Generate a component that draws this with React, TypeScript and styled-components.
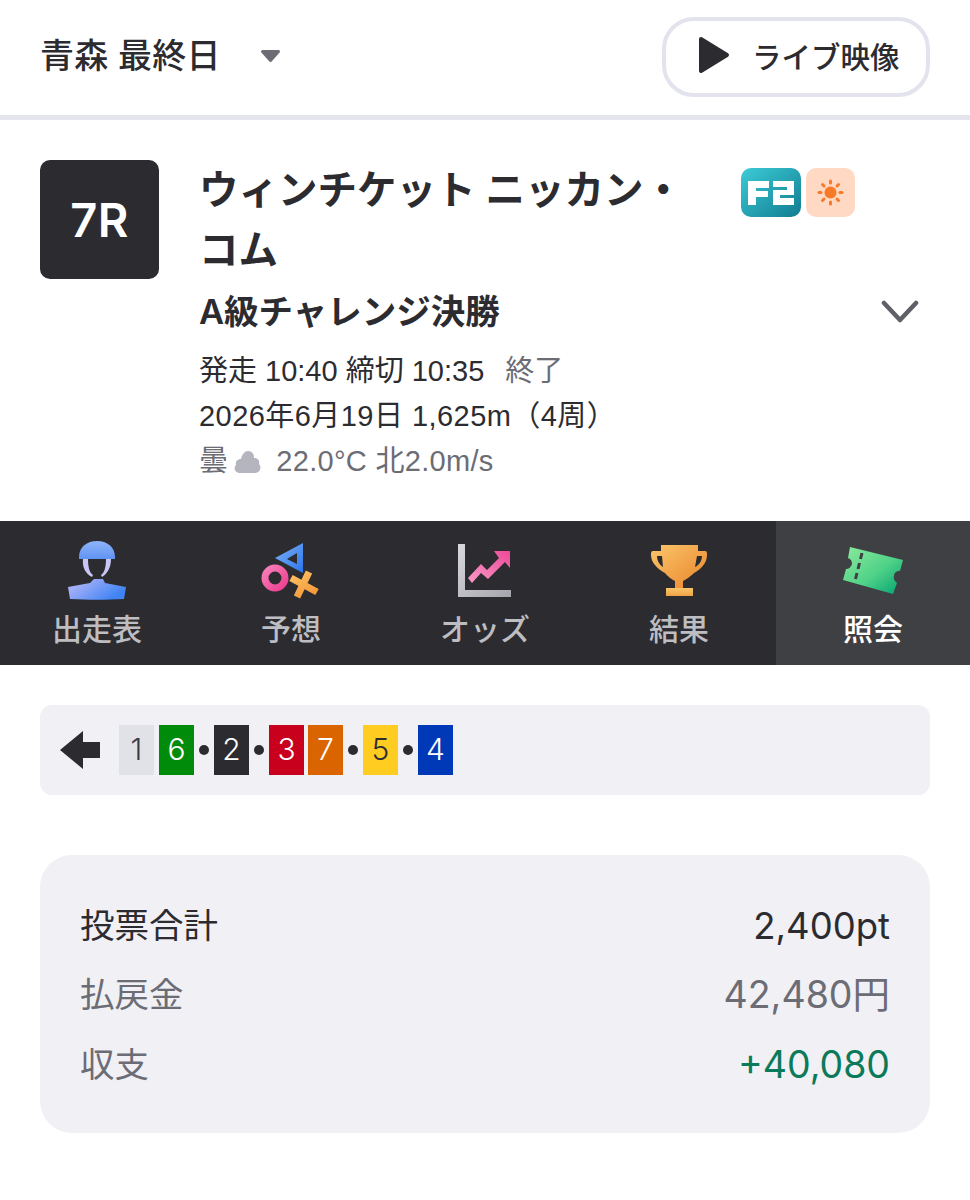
import React from "react";
import styled, { createGlobalStyle } from "styled-components";

const Global = createGlobalStyle`
  html, body { margin: 0; padding: 0; background: #fff; }
  body { font-family: "Inter", "Noto Sans CJK JP", sans-serif; color: #2c2c30; }
`;

const Page = styled.div`
  width: 970px;
  min-height: 1200px;
  background: #fff;
`;

const Header = styled.header`
  height: 115px;
  box-sizing: border-box;
  display: flex;
  align-items: center;
  justify-content: space-between;
  padding: 0 40px 0 40px;
`;

const Divider = styled.div`
  height: 5px;
  background: #e4e4ec;
`;

const VenueSelect = styled.div`
  display: flex;
  align-items: center;
  gap: 39px;
  margin-top: -4px;
`;

const VenueName = styled.span`
  font-size: 34px;
  line-height: 44px;
  font-weight: 500;
  letter-spacing: 0.3px;
  white-space: pre;
`;

const LiveButton = styled.button`
  width: 268px;
  height: 80px;
  box-sizing: border-box;
  border: 4px solid #e2e3ec;
  border-radius: 32px;
  background: #fff;
  display: flex;
  align-items: center;
  padding: 0 0 3px 32px;
  gap: 22px;
  font: 500 29.5px "Inter", "Noto Sans CJK JP", sans-serif;
  color: #2c2c30;
  margin-top: -2px;
  white-space: nowrap;
`;

const Race = styled.section`
  display: flex;
  padding: 40px 40px 0;
  height: 401px;
  box-sizing: border-box;
`;

const RaceBadge = styled.div`
  width: 119px;
  height: 119px;
  border-radius: 10px;
  background: #2c2c30;
  color: #fff;
  font-size: 47px;
  font-weight: 600;
  letter-spacing: 0.5px;
  display: flex;
  align-items: center;
  justify-content: center;
  flex: none;
`;

const RaceBody = styled.div`
  margin-left: 40px;
  flex: 1;
  min-width: 0;
`;

const TitleRow = styled.div`
  display: flex;
  justify-content: space-between;
`;

const RaceTitle = styled.h1`
  margin: 0;
  width: 500px;
  font-size: 39.5px;
  line-height: 60px;
  font-weight: 600;
`;

const Badges = styled.div`
  display: flex;
  gap: 5px;
  margin: 8px 75px 0 0;
`;

const SubRow = styled.div`
  display: flex;
  justify-content: space-between;
  align-items: center;
  height: 60px;
  margin-top: 2px;
  padding-right: 11px;
`;

const SubTitle = styled.h2`
  margin: 0;
  font-size: 34.5px;
  line-height: 60px;
  font-weight: 600;
  white-space: nowrap;
`;

const Detail = styled.div<{ $muted?: boolean; $spacing?: number }>`
  font-family: "Liberation Sans", "Noto Sans CJK JP", sans-serif;
  font-size: 29px;
  line-height: 45px;
  letter-spacing: ${(p) => p.$spacing ?? 0}px;
  white-space: pre;
  display: flex;
  align-items: center;
  color: ${(p) => (p.$muted ? "#6c6c75" : "#2c2c30")};
`;

const Muted = styled.span`
  color: #6c6c75;
  margin-left: 21px;
`;

const Details = styled.div`
  margin-top: 7px;
`;

const CloudIcon = styled.svg`
  width: 28px;
  height: 24px;
  margin: 0 15px 0 5px;
  flex: none;
`;

const Nav = styled.nav`
  display: grid;
  grid-template-columns: repeat(5, 194px);
  height: 144px;
  background: #2c2c30;
`;

const NavItem = styled.div<{ $active?: boolean }>`
  display: flex;
  flex-direction: column;
  align-items: center;
  padding-top: 19px;
  box-sizing: border-box;
  background: ${(p) => (p.$active ? "#3f4044" : "transparent")};
  color: ${(p) => (p.$active ? "#ffffff" : "#bdbdc2")};
  font-size: 30px;
  font-weight: 500;
`;

const NavIcon = styled.svg`
  width: 64px;
  height: 64px;
  display: block;
`;

const NavLabel = styled.span`
  line-height: 42px;
  margin-top: 4px;
`;

const Content = styled.main`
  padding: 40px 40px 0;
`;

const OrderPanel = styled.div`
  height: 90px;
  box-sizing: border-box;
  border-radius: 12px;
  background: #f0f0f5;
  display: flex;
  align-items: center;
  padding-left: 20px;
`;

const OrderArrow = styled.svg`
  width: 40px;
  height: 38px;
  margin-right: 19px;
  flex: none;
`;

const Bike = styled.span<{ $bg: string; $fg: string; $gap: number }>`
  width: 35px;
  height: 50px;
  flex: none;
  display: flex;
  align-items: center;
  justify-content: center;
  font-family: "Inter", sans-serif;
  font-size: 30px;
  line-height: 48px;
  font-weight: 300;
  padding-bottom: 2px;
  box-sizing: border-box;
  background: ${(p) => p.$bg};
  color: ${(p) => p.$fg};
  margin-left: ${(p) => p.$gap}px;
`;

const Dot = styled.span`
  width: 10px;
  height: 10px;
  border-radius: 50%;
  background: #2c2c30;
  margin-left: 5px;
  flex: none;
`;

const Summary = styled.section`
  margin-top: 60px;
  height: 278px;
  box-sizing: border-box;
  padding: 33px 40px;
  border-radius: 32px;
  background: #f0f0f5;
`;

const SummaryRow = styled.div<{ $tone: string }>`
  height: 69.5px;
  display: flex;
  align-items: center;
  justify-content: space-between;
  font-size: 34.5px;
  color: ${(p) => p.$tone};
`;

const Amount = styled.span<{ $size: number; $tone?: string }>`
  font-size: ${(p) => p.$size}px;
  line-height: 44px;
  padding-top: 6px;
  color: ${(p) => p.$tone ?? "inherit"};
`;

const bikes = [
  { n: 1, bg: "#e1e2e8", fg: "#3a3a42", gap: 0 },
  { n: 6, bg: "#008c0a", fg: "#fff", gap: 5 },
  { n: 2, bg: "#2c2c30", fg: "#fff", gap: 5, dot: true },
  { n: 3, bg: "#c8001e", fg: "#fff", gap: 5, dot: true },
  { n: 7, bg: "#d96400", fg: "#fff", gap: 4 },
  { n: 5, bg: "#ffcc22", fg: "#2c2c30", gap: 5, dot: true },
  { n: 4, bg: "#0039b8", fg: "#fff", gap: 5, dot: true },
];

const Jockey = () => (
  <NavIcon viewBox="0 0 64 64">
    <defs>
      <linearGradient id="jk1" x1="0" y1="0" x2="0" y2="1">
        <stop offset="0" stopColor="#8fb4f8" />
        <stop offset="1" stopColor="#5f94f4" />
      </linearGradient>
      <linearGradient id="jk2" x1="0" y1="0" x2="1" y2="0.5">
        <stop offset="0" stopColor="#c2bdf8" />
        <stop offset="1" stopColor="#3f83f4" />
      </linearGradient>
    </defs>
    <path d="M14 17 C14 7 22 1 32 1 C42 1 50 7 50 17 L50 19 L14 19 Z" fill="url(#jk1)" />
    <path d="M18 19 L23 19 C23 28 25 33 28 35 L27 37 C21 34 17 28 18 19 Z M41 19 L46 19 C46 28 42 34 37 37 L36 35 C39 33 41 28 41 19 Z" fill="#c9c5f7" />
    <path d="M25 43 L29 39 L38 39 L40 43 L61 47 L59 59 C40 60 24 60 5 59 L3 47 Z" fill="url(#jk2)" />
  </NavIcon>
);

const Marks = () => (
  <NavIcon viewBox="0 0 64 64">
    <defs>
      <linearGradient id="mk1" x1="0" y1="0" x2="1" y2="1">
        <stop offset="0" stopColor="#7eb3f7" />
        <stop offset="1" stopColor="#2c74ea" />
      </linearGradient>
      <linearGradient id="mk2" x1="0" y1="0" x2="1" y2="1">
        <stop offset="0" stopColor="#f77fb8" />
        <stop offset="1" stopColor="#ee3f90" />
      </linearGradient>
      <linearGradient id="mk3" x1="0" y1="0" x2="0.6" y2="1">
        <stop offset="0" stopColor="#fbc464" />
        <stop offset="1" stopColor="#f59a3c" />
      </linearGradient>
    </defs>
    <path fillRule="evenodd" d="M44 3 L44 33 L16 18 Z M38 13 L28 19 L38 24 Z" fill="url(#mk1)" />
    <circle cx="16" cy="38" r="10" fill="none" stroke="url(#mk2)" strokeWidth="7" />
    <path d="M50 32 L38 57 M32 38 L58 52" fill="none" stroke="url(#mk3)" strokeWidth="7" />
  </NavIcon>
);

const Chart = () => (
  <NavIcon viewBox="0 0 64 64">
    <defs>
      <linearGradient id="ch1" x1="0" y1="0" x2="1" y2="1">
        <stop offset="0" stopColor="#d8d8dd" />
        <stop offset="1" stopColor="#a5a5ad" />
      </linearGradient>
      <linearGradient id="ch2" x1="0" y1="1" x2="1" y2="0">
        <stop offset="0" stopColor="#f79ac6" />
        <stop offset="1" stopColor="#ee4a98" />
      </linearGradient>
    </defs>
    <path d="M5 4 L12 4 L12 50 L58 50 L58 57 L5 57 Z" fill="url(#ch1)" />
    <path d="M15 38 L28 24 L34 30 L46 18 L41 11 L57 11 L57 28 L52 22 L35 39 L28 33 L19 43 Z" fill="url(#ch2)" />
  </NavIcon>
);

const Trophy = () => (
  <NavIcon viewBox="0 0 64 64">
    <defs>
      <linearGradient id="tr1" x1="0" y1="0" x2="1" y2="1">
        <stop offset="0" stopColor="#fbc66c" />
        <stop offset="1" stopColor="#e9832a" />
      </linearGradient>
      <linearGradient id="tr2" x1="0" y1="0" x2="0" y2="1">
        <stop offset="0" stopColor="#f9c46a" />
        <stop offset="1" stopColor="#f0a246" />
      </linearGradient>
    </defs>
    <path
      fillRule="evenodd"
      d="M14 5 L51 5 L51 11 L58 11 C60 11 60 13 60 15 C60 23 54 29 47 33 C43 37 38 40 36 41 L36 49 L28 49 L28 41 C26 40 21 37 18 33 C11 29 4 23 4 15 C4 13 4 11 6 11 L14 11 Z M15 16 L10 16 C10 21 13 25 16 27 Z M50 16 L55 16 C55 21 52 25 48 27 Z"
      fill="url(#tr1)"
    />
    <path d="M19 48 H46 V56 H19 Z" fill="url(#tr2)" />
  </NavIcon>
);

const Ticket = () => (
  <NavIcon viewBox="0 0 64 64">
    <defs>
      <linearGradient id="tk1" x1="0" y1="0" x2="1" y2="1">
        <stop offset="0" stopColor="#8cea9c" />
        <stop offset="0.55" stopColor="#50d288" />
        <stop offset="1" stopColor="#00a270" />
      </linearGradient>
    </defs>
    <path
      d="M9 7 L62 20 L59 31 C55 31 53 33 53 36 C52 39 54 41 56 43 L52 54 L2 40 L5 29 C8 29 10 27 11 24 C11 21 10 19 7 18 Z"
      fill="url(#tk1)"
    />
    <path d="M21 13 L19.5 19 M18.5 23 L17 29 M16 33 L14.5 39" stroke="#3f4044" strokeWidth="3" fill="none" />
  </NavIcon>
);

export default function App() {
  return (
    <Page>
      <Global />
      <Header>
        <VenueSelect>
          <VenueName>青森 最終日</VenueName>
          <svg width="21" height="14" viewBox="0 0 21 14">
            <path d="M2.5 2.5 H18.5 L10.5 11.5 Z" fill="#6c6c75" stroke="#6c6c75" strokeWidth="3" strokeLinejoin="round" />
          </svg>
        </VenueSelect>
        <LiveButton>
          <svg width="32" height="38" viewBox="0 0 32 38">
            <path d="M3 3 L29 19 L3 35 Z" fill="#2c2c30" stroke="#2c2c30" strokeWidth="4" strokeLinejoin="round" />
          </svg>
          ライブ映像
        </LiveButton>
      </Header>
      <Divider />
      <Race>
        <RaceBadge>7R</RaceBadge>
        <RaceBody>
          <TitleRow>
            <RaceTitle>ウィンチケット ニッカン・コム</RaceTitle>
            <Badges>
              <svg width="60" height="49" viewBox="0 0 60 49">
                <defs>
                  <linearGradient id="f2" x1="0" y1="0" x2="1" y2="1">
                    <stop offset="0" stopColor="#3ccbd6" />
                    <stop offset="1" stopColor="#117d92" />
                  </linearGradient>
                </defs>
                <rect width="60" height="49" rx="10" fill="url(#f2)" />
                <path d="M7 13 H28 V20 H15 V23 H27 V29 H15 V37 H7 Z" fill="#fff" />
                <path d="M32 13 H53 V27 H39 V30 H53 V37 H32 V22 H46 V19 H32 Z" fill="#fff" />
              </svg>
              <svg width="49" height="49" viewBox="0 0 49 49">
                <rect width="49" height="49" rx="10" fill="#ffd9c4" />
                <circle cx="24.5" cy="24.5" r="6" fill="#f77a28" />
                <g stroke="#f77a28" strokeWidth="3" strokeLinecap="round">
                  <path d="M24.5 13 V15" />
                  <path d="M24.5 34 V36" />
                  <path d="M13 24.5 H15" />
                  <path d="M34 24.5 H36" />
                  <path d="M16.5 16.5 L18 18" />
                  <path d="M31 31 L32.5 32.5" />
                  <path d="M32.5 16.5 L31 18" />
                  <path d="M18 31 L16.5 32.5" />
                </g>
              </svg>
            </Badges>
          </TitleRow>
          <SubRow>
            <SubTitle>A級チャレンジ決勝</SubTitle>
            <svg width="38" height="24" viewBox="0 0 38 24">
              <path d="M3 3 L19 20 L35 3" fill="none" stroke="#5f6068" strokeWidth="4.5" strokeLinecap="round" strokeLinejoin="round" />
            </svg>
          </SubRow>
          <Details>
            <Detail>
              発走 10:40 締切 10:35<Muted>終了</Muted>
            </Detail>
            <Detail $spacing={0.45}>2026年6月19日 1,625m（4周）</Detail>
            <Detail $muted $spacing={0.3}>
              曇
              <CloudIcon viewBox="0 0 28 24">
                <path d="M7 23 C2 23 0 18 3 15 C2 11 5 9 8 9 C9 4 12 1 15 1 C19 1 21 4 21 8 C25 8 27 11 26 14 C29 17 27 23 22 23 Z" fill="#b4b5be" />
              </CloudIcon>
              22.0°C 北2.0m/s
            </Detail>
          </Details>
        </RaceBody>
      </Race>
      <Nav>
        <NavItem>
          <Jockey />
          <NavLabel>出走表</NavLabel>
        </NavItem>
        <NavItem>
          <Marks />
          <NavLabel>予想</NavLabel>
        </NavItem>
        <NavItem>
          <Chart />
          <NavLabel>オッズ</NavLabel>
        </NavItem>
        <NavItem>
          <Trophy />
          <NavLabel>結果</NavLabel>
        </NavItem>
        <NavItem $active>
          <Ticket />
          <NavLabel>照会</NavLabel>
        </NavItem>
      </Nav>
      <Content>
        <OrderPanel>
          <OrderArrow viewBox="0 0 40 38">
            <path d="M0 19 L23 0 V11 H40 V27 H23 V38 Z" fill="#2c2c30" />
          </OrderArrow>
          {bikes.map((b) => (
            <React.Fragment key={b.n}>
              {b.dot && <Dot />}
              <Bike $bg={b.bg} $fg={b.fg} $gap={b.gap}>
                {b.n}
              </Bike>
            </React.Fragment>
          ))}
        </OrderPanel>
        <Summary>
          <SummaryRow $tone="#2c2c30">
            <span>投票合計</span>
            <Amount $size={36.5}>2,400pt</Amount>
          </SummaryRow>
          <SummaryRow $tone="#6c6c75">
            <span>払戻金</span>
            <Amount $size={37.5}>42,480円</Amount>
          </SummaryRow>
          <SummaryRow $tone="#6c6c75">
            <span>収支</span>
            <Amount $size={37.5} $tone="#0b7a5a">+40,080</Amount>
          </SummaryRow>
        </Summary>
      </Content>
    </Page>
  );
}
